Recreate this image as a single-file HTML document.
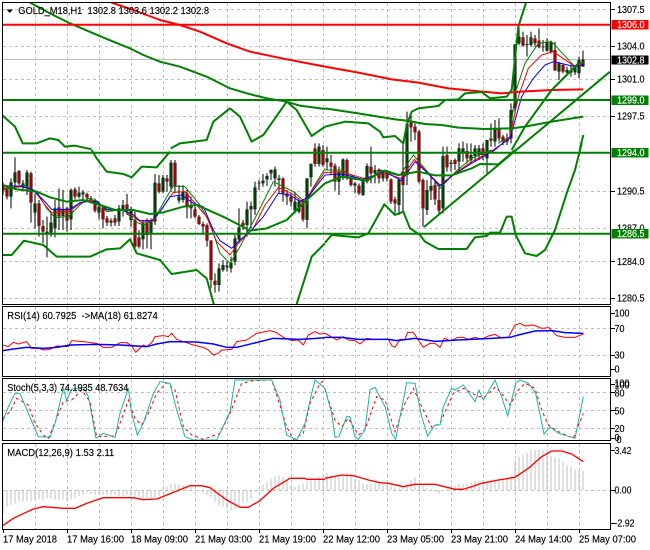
<!DOCTYPE html>
<html><head><meta charset="utf-8"><title>GOLD M18 H1</title>
<style>
html,body{margin:0;padding:0;background:#fff;width:650px;height:550px;overflow:hidden}
svg{display:block}
text{font-family:"Liberation Sans",sans-serif;font-size:10px;fill:#000;white-space:pre;stroke:#000;stroke-width:.15px}
.w{fill:#fff;stroke:#fff}
.grid{stroke:#c0c0c0;stroke-width:1;stroke-dasharray:3 3;fill:none}
.t{fill:none;stroke-width:3;stroke-linejoin:round}
.k{fill:none;stroke-width:6;stroke-linejoin:round}
.b{fill:none;stroke-width:4.5;stroke-linejoin:round}
</style></head><body>
<svg width="650" height="550" viewBox="0 0 650 550" xmlns="http://www.w3.org/2000/svg">
<defs>
<clipPath id="m"><rect x="3" y="3" width="607" height="301"/></clipPath>
<clipPath id="r"><rect x="3" y="307" width="607" height="69"/></clipPath>
<clipPath id="s"><rect x="3" y="379" width="607" height="61"/></clipPath>
<clipPath id="c"><rect x="3" y="444" width="607" height="85"/></clipPath>
<path id="bg" d="M33 97V140M45 67V97M69 100V112M81 67V112M105 160V188M141 245V250M153 218V248M165 175V235M189 178V198M213 120V208M237 128V140M249 127V133M273 145V150M297 170V188M333 212V218M357 175V215M369 165V182M393 183V210M429 220V268M453 212V252M465 98V215M489 83V125M513 38V110M537 140V152M549 125V150M657 355V405M669 345V360M681 347V352M693 338V355M705 265V335M717 232V268M741 178V225M753 168V178M765 112V178M777 98V100M789 92V100M801 78V88M813 60V70M825 58V85M837 85V90M885 155V182M897 155V185M921 85V210M933 42V82M957 -10V42M981 25V37M1017 65V95M1029 28V82M1065 100V107M1089 88V135M1101 48V95M1125 60V70M1149 68V85M1197 88V165M1221 -78V75M1281 120V180M1293 108V122M1329 18V175M1353 38V42M1377 -5V35M1389 -5V10M1413 15V30M1425 -5V18M1437 -5V15M1461 -30V25M1485 -65V-25M1521 -35V-25M1533 -120V-35M1545 -317V-125M1557 -340V-320M1581 -318V-315M1593 -338V-315M1629 -310V-308M1641 -325V-298M1653 -323V-295M1677 -260V-235M1701 -240V-233M1713 -240V-233M1725 -250V-233M1737 -270V-230M1749 -272V-250"/>
<path id="br" d="M9 108V122M21 112V140M57 63V100M93 70V158M117 160V228M129 228V245M177 172V200M201 175V212M225 118V140M261 132V143M285 150V182M309 172V208M321 205V218M345 205V218M381 163V182M405 210V290M417 262V290M441 218V255M477 100V125M501 85V95M525 38V110M561 130V172M573 165V175M585 178V200M597 200V222M609 222V230M621 225V272M633 272V390M645 392V405M729 218V228M849 85V130M861 130V140M873 140V155M909 155V208M945 -5V42M969 0V45M993 38V50M1005 47V95M1041 30V80M1053 83V105M1077 107V130M1113 50V70M1137 58V85M1161 68V85M1173 88V155M1185 148V160M1209 65V105M1233 -83V-68M1245 -70V-53M1257 -55V95M1269 90V175M1305 105V148M1317 150V182M1341 15V52M1365 30V42M1401 3V25M1449 -5V15M1473 -35V-28M1497 -65V-35M1509 -40V-25M1569 -338V-313M1605 -335V-320M1617 -328V-308M1665 -300V-238M1689 -255V-235"/>
</defs>

<!-- main grid -->
<g class="grid">
<path d="M3 9.5H610M3 46.5H610M3 79.5H610M3 116.5H610M3 191.5H610M3 228.5H610M3 261.5H610M3 298.5H610"/>
<path d="M35.5 3V304M67.5 3V304M99.5 3V304M131.5 3V304M163.5 3V304M195.5 3V304M227.5 3V304M259.5 3V304M291.5 3V304M323.5 3V304M355.5 3V304M387.5 3V304M419.5 3V304M451.5 3V304M483.5 3V304M515.5 3V304M547.5 3V304M579.5 3V304"/>
<path d="M3 328.5H610M3 355.5H610M35.5 307V376M67.5 307V376M99.5 307V376M131.5 307V376M163.5 307V376M195.5 307V376M227.5 307V376M259.5 307V376M291.5 307V376M323.5 307V376M355.5 307V376M387.5 307V376M419.5 307V376M451.5 307V376M483.5 307V376M515.5 307V376M547.5 307V376M579.5 307V376"/>
<path d="M3 392.5H610M3 410.5H610M3 428.5H610M35.5 379V440M67.5 379V440M99.5 379V440M131.5 379V440M163.5 379V440M195.5 379V440M227.5 379V440M259.5 379V440M291.5 379V440M323.5 379V440M355.5 379V440M387.5 379V440M419.5 379V440M451.5 379V440M483.5 379V440M515.5 379V440M547.5 379V440M579.5 379V440"/>
<path d="M3 490.5H610M35.5 444V529M67.5 444V529M99.5 444V529M131.5 444V529M163.5 444V529M195.5 444V529M227.5 444V529M259.5 444V529M291.5 444V529M323.5 444V529M355.5 444V529M387.5 444V529M419.5 444V529M451.5 444V529M483.5 444V529M515.5 444V529M547.5 444V529M579.5 444V529"/>
</g>
<path d="M3 59.5H610" stroke="#c0c0c0" stroke-width="1"/>

<!-- main chart -->
<g clip-path="url(#m)">
<g transform="translate(0,150) scale(.33333)" fill="none">
<path stroke="#000" stroke-width="3" d="M9 98V135M21 105V148M33 85V175M45 22V120M57 60V105M69 90V118M81 60V135M93 65V218M105 130V235M117 150V260M129 210V280M141 200V322M153 190V260M165 150V262M177 115V240M189 120V240M201 170V245M213 115V240M225 112V148M237 110V145M249 120V148M261 128V148M273 138V160M285 145V188M297 165V208M309 165V235M321 198V228M333 205V230M345 195V228M357 165V228M369 150V200M381 132V195M393 170V230M405 185V295M417 240V295M429 210V298M441 205V295M453 205V298M465 72V225M477 75V130M489 75V130M501 75V125M513 30V125M525 30V130M537 105V160M549 105V158M561 120V205M573 140V205M585 170V205M597 195V225M609 215V250M621 220V290M633 270V415M645 370V428M657 340V425M669 330V365M681 335V365M693 320V368M705 255V345M717 175V278M729 210V240M741 155V260M753 155V235M765 95V195M777 90V120M789 72V110M801 70V108M813 58V90M825 50V110M837 75V130M849 82V155M861 120V165M873 130V170M885 125V190M897 145V190M909 148V215M921 85V235M933 40V110M945 -20V50M957 -20V50M969 -15V50M981 -10V60M993 15V75M1005 40V122M1017 50V135M1029 25V90M1041 25V90M1053 80V110M1065 95V130M1077 100V135M1089 85V138M1101 40V100M1113 -10V100M1125 45V100M1137 55V100M1149 60V95M1161 60V95M1173 85V162M1185 140V190M1197 85V195M1209 -25V185M1221 -115V105M1233 -105V-25M1245 -80V-30M1257 -60V100M1269 85V230M1281 90V195M1293 80V150M1305 90V165M1317 105V195M1329 -10V190M1341 -10V65M1353 30V65M1365 25V60M1377 -20V65M1389 -25V35M1401 -20V40M1413 -20V40M1425 -15V35M1437 -15V30M1449 -20V30M1461 -30V70M1473 -80V-10M1485 -90V-10M1497 -95V-25M1509 -45V-15M1521 -50V-15M1533 -140V-20M1545 -317V-110M1557 -380V-315M1569 -355V-310M1581 -345V-280M1593 -355V-310M1605 -345V-310M1617 -365V-305M1629 -330V-295M1641 -335V-295M1653 -328V-290M1665 -325V-238M1677 -265V-210M1689 -260V-230M1701 -250V-225M1713 -255V-220M1725 -255V-225M1737 -280V-215M1749 -298V-250"/>
<use href="#bg" stroke="#000" stroke-width="9"/>
<use href="#br" stroke="#000" stroke-width="9"/>
<use href="#bg" stroke="#006400" stroke-width="4"/>
<use href="#br" stroke="#f00" stroke-width="4"/>
</g>

<!-- thin MAs -->
<g transform="translate(0,150) scale(.33333)">
<polyline class="t" stroke="#008000" points="10,120 70,105 110,125 140,175 165,203 205,200 240,165 265,145 295,155 320,185 370,178 405,215 430,225 460,212 495,150 520,108 555,110 600,165 630,220 660,310 690,340 720,290 770,195 820,95 880,125 920,160 935,120 975,55"/>
<polyline class="t" stroke="#f00" points="10,115 70,110 105,125 135,165 155,188 210,183 240,160 262,150 290,155 320,180 370,180 400,200 425,218 460,212 490,170 520,127 555,125 590,165 620,200 650,275 690,315 715,280 760,235 795,165 835,113 875,130 910,158 930,130 975,65"/>
<polyline class="t" stroke="#00f" points="10,108 60,108 100,120 130,150 155,178 210,178 240,158 260,155 290,155 320,178 370,182 395,190 420,212 455,212 480,185 510,140 545,135 580,160 610,170 640,240 660,272 695,295 720,270 750,245 790,200 835,130 870,135 900,155 925,140 975,75"/>
</g>
<g transform="translate(325,150) scale(.33333)">
<polyline class="t" stroke="#008000" points="0,60 50,60 115,95 180,60 225,75 265,15 320,80 345,115 395,62 440,25 500,0"/>
<polyline class="t" stroke="#f00" points="0,68 50,65 115,85 180,70 228,85 268,28 310,70 345,105 390,70 440,35 505,0"/>
<polyline class="t" stroke="#00f" points="0,75 50,72 115,88 180,65 230,92 270,35 300,62 345,108 385,75 440,40 510,0"/>
</g>
<g transform="translate(325,0) scale(.33333)">
<polyline class="t" stroke="#008000" points="520,430 555,410 570,280 600,190 640,130 680,125 750,200 775,185"/>
<polyline class="t" stroke="#f00" points="510,450 555,410 580,290 610,205 650,165 685,155 750,200 775,190"/>
<polyline class="t" stroke="#00f" points="505,450 555,415 590,290 625,235 660,195 685,185 750,200 775,195"/>
</g>

<!-- long MAs -->
<g transform="scale(.33333)">
<polyline class="k" stroke="#008000" points="90,8 150,40 210,70 280,100 340,125 390,145 430,165 480,185 540,200 620,230 690,265 740,280 800,295 860,305 900,317 975,327"/>
<polyline class="k" stroke="#f00" points="335,8 400,30 480,60 540,75 600,95 680,130 750,155 860,178 975,200"/>
<polyline class="k" stroke="#008000" points="8,347 45,380 68,430 110,430 150,415 175,420 195,440 225,437 275,448"/>
<polyline class="k" stroke="#008000" points="512,445 540,430 620,420 640,365 690,325 720,350 755,425 790,405 860,305 890,330 935,408 975,380"/>
</g>
<g transform="translate(325,0) scale(.33333)">
<polyline class="k" stroke="#008000" points="0,325 100,340 210,358 245,362 300,372 350,375 400,383 480,387 560,385 600,380 680,365 775,350"/>
<polyline class="k" stroke="#f00" points="0,200 100,218 200,238 280,248 370,265 440,272 530,280 590,275 680,270 775,268"/>
<polyline class="k" stroke="#008000" points="0,380 60,365 130,370 165,395 175,412 210,408 235,430 245,375 260,335 280,325 340,318 360,300 400,298 420,280 470,276 495,295 545,290 560,270 580,80 603,8"/>
<polyline class="k" stroke="#008000" points="764,450 775,405"/>
<polyline class="k" stroke="#008000" points="560,450 600,380 680,270 760,190"/>
</g>
<g transform="translate(0,150) scale(.33333)">
<polyline class="k" stroke="#008000" points="275,0 290,25 320,65 370,72 395,82 425,50 470,52 510,5"/>
<polyline class="k" stroke="#008000" points="8,105 50,118 110,125 150,142 200,155 250,150 300,165 345,180 400,180 450,192 490,187 550,170 590,165 620,178 680,205 750,242 800,235 860,210 920,150 975,100"/>
<polyline class="k" stroke="#008000" points="8,315 35,315 72,272 130,285 170,320 270,320 320,298 360,295 390,268 410,310 480,330 515,372 590,360 620,385 642,465"/>
<polyline class="k" stroke="#008000" points="890,462 935,320 975,280"/>
</g>
<g transform="translate(325,150) scale(.33333)">
<polyline class="k" stroke="#008000" points="0,100 50,80 100,88 130,90 170,62 220,75 280,65 330,76 380,76 440,55 465,42 520,43 570,0"/>
<polyline class="k" stroke="#008000" points="0,278 20,255 100,262 130,250 178,163 210,195 235,185 255,235 285,255 300,275 340,297 425,297 450,262 485,258 495,248 525,248 545,200 560,200 572,255 600,310 635,318 660,300 690,240 725,130 750,60 770,-20"/>
</g>
<path d="M424 227L610 71.7" stroke="#008000" stroke-width="2" fill="none"/>

<!-- levels -->
<path d="M3 24.7H610" stroke="#f00" stroke-width="2"/>
<path d="M3 100H610M3 152.7H610M3 233.7H610" stroke="#008000" stroke-width="2"/>
</g>

<!-- RSI -->
<g clip-path="url(#r)">
<g transform="translate(0,300) scale(.33333)">
<polyline class="t" stroke="#f00" points="8,135 25,140 40,127 55,132 80,125 95,145 115,145 130,150 150,148 170,138 205,140 215,122 250,125 290,130 310,142 335,142 360,128 380,128 395,137 407,157 430,135 440,140 455,128 465,110 490,107 505,110 515,100 530,118 550,125 580,135 610,142 625,150 640,165 655,160 665,150 695,148 710,125 740,120 770,100 810,92 830,98 850,112 875,122 895,120 910,135 925,105 945,95 960,102 975,100"/>
<polyline class="b" stroke="#00f" points="8,152 40,147 80,142 130,145 170,142 210,135 290,133 360,135 440,140 470,132 510,125 590,126 640,132 680,142 710,142 760,130 820,115 900,118 950,115 975,113"/>
</g>
<g transform="translate(325,300) scale(.33333)">
<polyline class="t" stroke="#f00" points="0,100 15,108 35,120 55,110 70,120 90,122 105,132 125,115 150,118 190,118 200,137 210,142 225,118 240,118 248,97 265,97 280,120 295,142 315,130 330,130 345,142 358,115 375,122 400,112 415,112 430,118 450,112 470,118 490,108 510,103 525,112 550,112 570,75 585,70 600,78 625,75 650,85 672,83 695,107 720,112 750,112 775,102"/>
<polyline class="b" stroke="#00f" points="0,112 50,112 100,118 190,118 215,122 270,115 330,124 400,120 500,115 555,112 580,105 630,93 680,92 720,98 775,100"/>
</g>
</g>

<!-- Stoch -->
<g clip-path="url(#s)">
<g transform="translate(0,300) scale(.33333)" fill="none">
<polyline stroke="#f00" stroke-width="3" stroke-dasharray="9 9" points="8,355 30,335 50,295 85,315 105,370 130,405 145,415 170,355 190,305 215,300 245,270 270,305 290,410 345,408 360,370 385,300 405,355 425,375 445,340 470,280 500,248 525,270 550,380 575,405 610,418 660,400 690,340 725,250 760,242 815,240 835,300 860,380 880,418 910,400 930,310 960,250 975,240"/>
<polyline stroke="#20b2aa" stroke-width="3" points="8,365 25,320 45,280 60,280 85,340 100,375 115,410 150,412 165,370 190,265 200,300 215,268 250,262 265,290 280,370 288,415 310,400 345,412 360,340 385,265 395,340 412,405 430,370 460,280 480,245 510,250 530,330 555,410 580,420 650,420 690,335 705,240 790,240 815,240 840,300 860,405 890,420 915,370 935,280 945,240 975,265"/>
</g>
<g transform="translate(325,300) scale(.33333)" fill="none">
<polyline stroke="#f00" stroke-width="3" stroke-dasharray="9 9" points="0,268 30,360 50,380 70,355 100,405 120,390 155,290 180,300 210,395 240,310 265,265 295,330 320,382 345,370 385,280 415,265 460,290 480,290 510,262 530,280 555,315 580,270 600,250 630,265 650,330 670,375 700,395 745,415 775,340"/>
<polyline stroke="#20b2aa" stroke-width="3" points="0,265 20,340 30,412 42,410 65,350 75,350 90,410 100,418 120,390 135,270 150,262 180,320 200,400 212,418 245,248 270,250 290,350 308,408 330,375 345,375 355,320 380,265 390,270 415,255 450,305 462,270 475,300 510,240 530,290 548,348 572,250 585,240 610,250 632,280 657,402 675,380 700,400 740,412 750,415 775,290"/>
</g>
</g>

<!-- MACD -->
<g clip-path="url(#c)">
<g transform="translate(0,435) scale(.33333)" fill="none">
<path stroke="#c0c0c0" stroke-width="3" d="M9 165V235M21 165V215M33 165V210M45 165V205M57 165V200M69 165V200M81 165V200M93 165V200M105 165V195M117 165V193M129 165V195M141 165V190M153 165V190M165 165V195M177 165V195M189 165V193M201 165V197M213 165V193M225 165V187M237 165V183M249 165V180M261 165V175M273 165V177M285 165V180M297 165V177M309 165V180M321 165V180M333 165V180M345 165V180M357 165V183M369 165V185M381 165V180M393 165V183M405 165V185M417 165V187M429 165V190M441 165V190M453 165V193M465 165V187M477 165V183M489 165V160M501 165V155M513 165V147M525 165V145M537 165V150M549 165V150M561 165V153M573 165V157M597 165V170M609 165V175M621 165V180M633 165V187M645 165V200M657 165V210M669 165V215M681 165V220M693 165V225M705 165V220M717 165V215M729 165V205M741 165V200M753 165V190M765 165V170M777 165V160M789 165V150M801 165V140M813 165V130M825 165V125M837 165V122M849 165V125M861 165V135M873 165V150M885 165V155M897 165V150M909 165V145M921 165V138M933 165V135M945 165V130M957 165V125M969 165V120M981 165V115M993 165V120M1005 165V127M1017 165V120M1029 165V120M1041 165V115M1053 165V115M1065 165V132M1077 165V135M1089 165V145M1101 165V148M1113 165V148M1125 165V145M1137 165V140M1149 165V145M1161 165V145M1173 165V150M1185 165V157M1197 165V160M1209 165V155M1221 165V147M1233 165V135M1245 165V127M1257 165V150M1269 165V153M1281 165V160M1293 165V163M1305 165V170M1317 165V175M1341 165V160M1353 165V157M1365 165V153M1377 165V147M1389 165V147M1401 165V145M1413 165V143M1425 165V137M1437 165V139M1449 165V137M1461 165V137M1473 165V135M1485 165V133M1497 165V130M1509 165V130M1521 165V127M1533 165V123M1545 165V75M1557 165V65M1569 165V60M1581 165V53M1593 165V45M1605 165V43M1617 165V43M1629 165V45M1641 165V55M1653 165V63M1665 165V67M1677 165V70M1689 165V80M1701 165V90M1713 165V95M1725 165V103M1737 165V105M1749 165V108"/>
<polyline stroke="#f00" stroke-width="4" stroke-linejoin="round" points="8,272 40,250 100,222 130,215 190,220 225,220 260,205 310,188 400,188 430,194 470,192 520,172 570,152 605,152 630,158 680,195 720,217 745,217 780,197 820,160 870,130 915,130 920,133 975,133"/>
</g>
<g transform="translate(325,435) scale(.33333)" fill="none">
<polyline stroke="#f00" stroke-width="4" stroke-linejoin="round" points="0,130 50,120 85,122 130,135 165,143 190,145 235,155 270,148 330,148 390,163 415,163 470,145 520,135 570,127 610,100 650,65 680,48 710,48 740,57 775,80"/>
</g>
</g>

<!-- panel borders -->
<g fill="none" stroke="#000" stroke-width="1">
<rect x="2.5" y="2.5" width="608" height="302"/>
<rect x="2.5" y="306.5" width="608" height="70"/>
<rect x="2.5" y="378.5" width="608" height="62"/>
<rect x="2.5" y="443.5" width="608" height="86"/>
<path d="M611 9.5H615M611 46.5H615M611 79.5H615M611 116.5H615M611 191.5H615M611 261.5H615M611 298.5H615M611 313.5H615M611 328.5H615M611 355.5H615M611 369.5H615M611 384.5H615M611 392.5H615M611 410.5H615M611 428.5H615M611 438.5H615M611 450.5H615M611 490.5H615M611 523.5H615"/>
<path d="M3.5 530V533M67.5 530V533M131.5 530V533M195.5 530V533M259.5 530V533M323.5 530V533M387.5 530V533M451.5 530V533M515.5 530V533M579.5 530V533"/>
</g>

<!-- title -->
<path d="M6.5 9.5H13L9.7 13Z" fill="#000"/>
<text x="18.3" y="14" textLength="190.7" lengthAdjust="spacingAndGlyphs">GOLD_M18,H1  1302.8 1303.6 1302.2 1302.8</text>
<text x="7.3" y="319" textLength="150.4" lengthAdjust="spacingAndGlyphs">RSI(14) 60.7925  -&gt;MA(18) 61.8274</text>
<text x="7.3" y="391" textLength="121" lengthAdjust="spacingAndGlyphs">Stoch(5,3,3) 74.1935 48.7634</text>
<text x="7.3" y="456" textLength="107" lengthAdjust="spacingAndGlyphs">MACD(12,26,9) 1.53 2.11</text>

<!-- right axis -->
<text x="617" y="13" textLength="27.5" lengthAdjust="spacingAndGlyphs">1307.5</text>
<text x="617" y="49.5" textLength="27.5" lengthAdjust="spacingAndGlyphs">1304.0</text>
<text x="617" y="82.5" textLength="27.5" lengthAdjust="spacingAndGlyphs">1301.0</text>
<text x="617" y="119.5" textLength="27.5" lengthAdjust="spacingAndGlyphs">1297.5</text>
<text x="617" y="194.5" textLength="27.5" lengthAdjust="spacingAndGlyphs">1290.5</text>
<text x="617" y="231.5" textLength="27.5" lengthAdjust="spacingAndGlyphs">1287.0</text>
<text x="617" y="265" textLength="27.5" lengthAdjust="spacingAndGlyphs">1284.0</text>
<text x="617" y="301.5" textLength="27.5" lengthAdjust="spacingAndGlyphs">1280.5</text>

<rect x="611.5" y="20" width="37" height="9.5" fill="#f00"/>
<text class="w" x="617" y="28" textLength="27.5" lengthAdjust="spacingAndGlyphs">1306.0</text>
<rect x="611.5" y="55.5" width="37" height="9" fill="#000"/>
<text class="w" x="617" y="63.5" textLength="27.5" lengthAdjust="spacingAndGlyphs">1302.8</text>
<rect x="611.5" y="95.5" width="37" height="9.5" fill="#008000"/>
<text class="w" x="617" y="103.5" textLength="27.5" lengthAdjust="spacingAndGlyphs">1299.0</text>
<rect x="611.5" y="148" width="37" height="9.5" fill="#008000"/>
<text class="w" x="617" y="156" textLength="27.5" lengthAdjust="spacingAndGlyphs">1294.0</text>
<rect x="611.5" y="229" width="37" height="9.5" fill="#008000"/>
<text class="w" x="617" y="237" textLength="27.5" lengthAdjust="spacingAndGlyphs">1286.5</text>

<text x="614.5" y="316.5" textLength="15" lengthAdjust="spacingAndGlyphs">100</text>
<text x="614.5" y="332" textLength="10" lengthAdjust="spacingAndGlyphs">70</text>
<text x="614.5" y="358.5" textLength="10" lengthAdjust="spacingAndGlyphs">30</text>
<text x="614.5" y="372.5" textLength="5" lengthAdjust="spacingAndGlyphs">0</text>

<text x="614.5" y="386.5" textLength="15" lengthAdjust="spacingAndGlyphs">100</text>
<text x="614.5" y="388.5" textLength="15" lengthAdjust="spacingAndGlyphs">100</text>
<text x="614.5" y="396.5" textLength="10" lengthAdjust="spacingAndGlyphs">80</text>
<text x="614.5" y="414.5" textLength="10" lengthAdjust="spacingAndGlyphs">50</text>
<text x="614.5" y="432" textLength="10" lengthAdjust="spacingAndGlyphs">20</text>
<text x="614.5" y="441" textLength="5" lengthAdjust="spacingAndGlyphs">0</text>
<text x="616.5" y="443" textLength="5" lengthAdjust="spacingAndGlyphs">0</text>

<text x="614.5" y="454" textLength="17" lengthAdjust="spacingAndGlyphs">3.42</text>
<text x="614.5" y="493.5" textLength="17" lengthAdjust="spacingAndGlyphs">0.00</text>
<text x="614.5" y="526.5" textLength="20" lengthAdjust="spacingAndGlyphs">-2.92</text>

<!-- bottom axis -->
<text x="3" y="542.5" textLength="54" lengthAdjust="spacingAndGlyphs">17 May 2018</text>
<text x="67" y="542.5" textLength="57" lengthAdjust="spacingAndGlyphs">17 May 16:00</text>
<text x="131" y="542.5" textLength="57" lengthAdjust="spacingAndGlyphs">18 May 09:00</text>
<text x="195" y="542.5" textLength="57" lengthAdjust="spacingAndGlyphs">21 May 03:00</text>
<text x="259" y="542.5" textLength="57" lengthAdjust="spacingAndGlyphs">21 May 19:00</text>
<text x="323" y="542.5" textLength="57" lengthAdjust="spacingAndGlyphs">22 May 12:00</text>
<text x="387" y="542.5" textLength="57" lengthAdjust="spacingAndGlyphs">23 May 05:00</text>
<text x="451" y="542.5" textLength="57" lengthAdjust="spacingAndGlyphs">23 May 21:00</text>
<text x="515" y="542.5" textLength="57" lengthAdjust="spacingAndGlyphs">24 May 14:00</text>
<text x="579" y="542.5" textLength="57" lengthAdjust="spacingAndGlyphs">25 May 07:00</text>
</svg>
</body></html>
